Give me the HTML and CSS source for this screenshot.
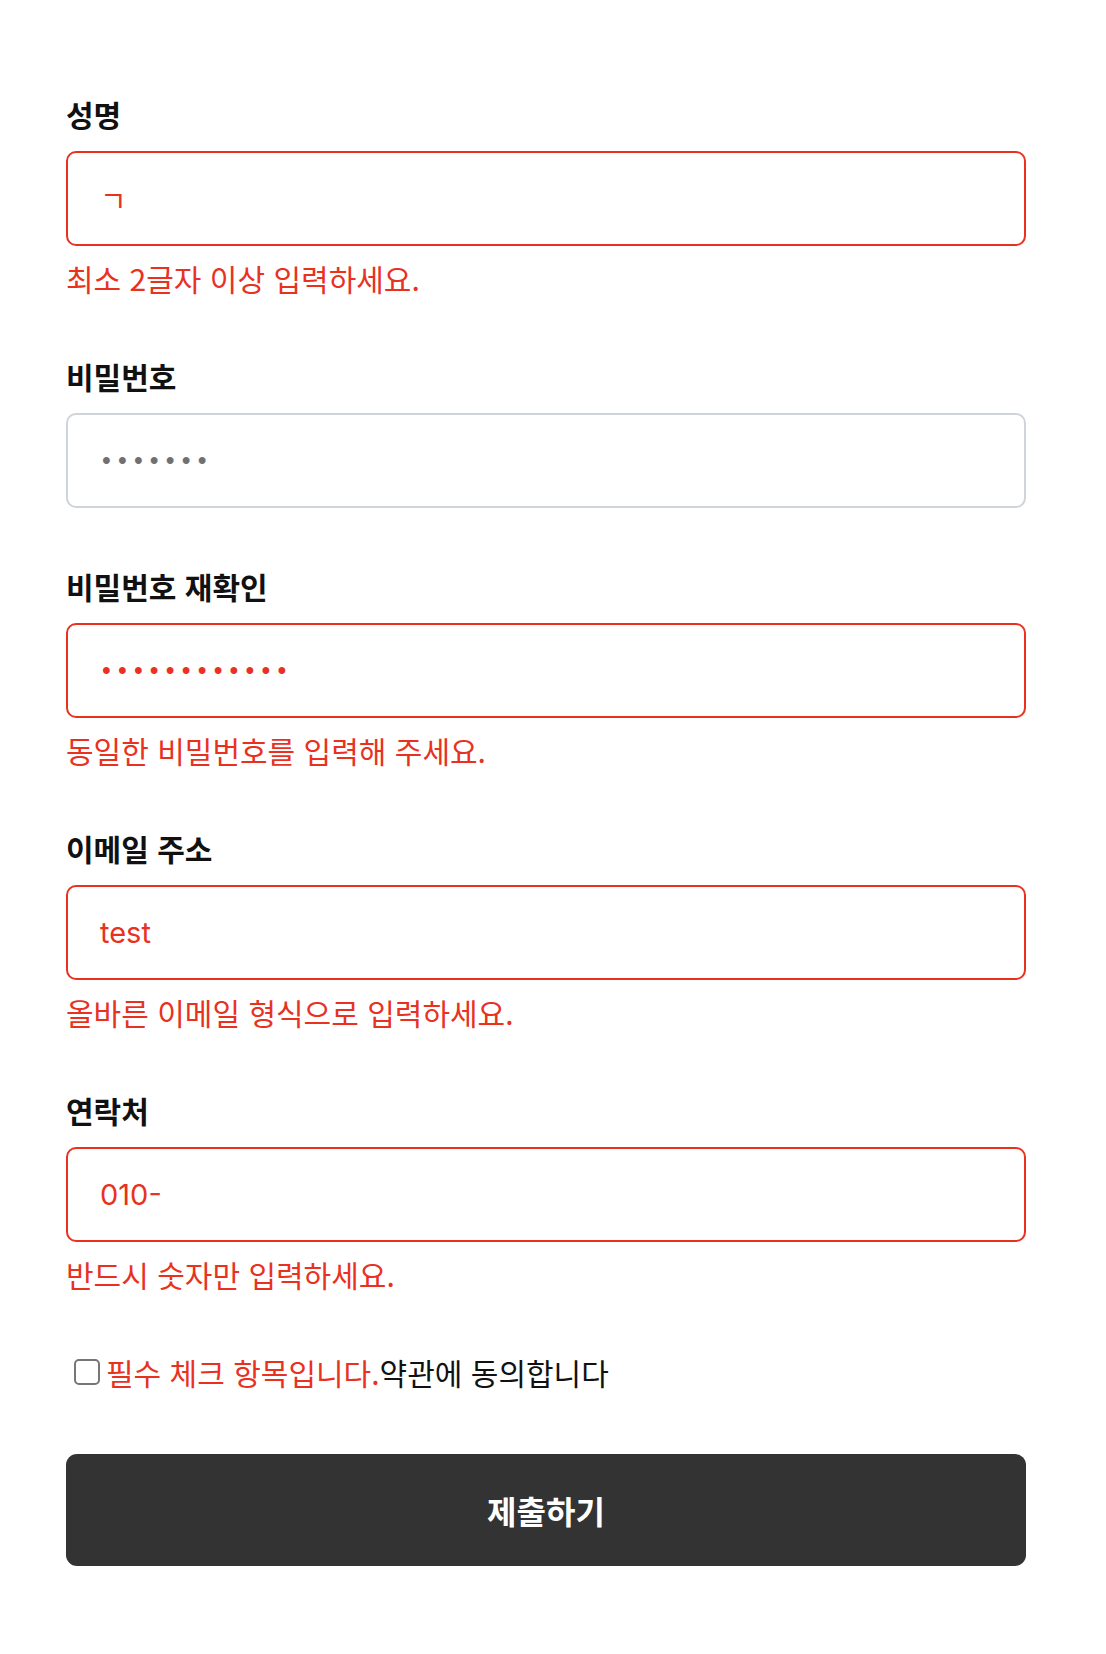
FILE: index.html
```html
<!DOCTYPE html>
<html lang="ko">
<head>
<meta charset="utf-8">
<title>회원가입</title>
<link rel="stylesheet" href="styles.css">
</head>
<body>
<main class="page">
  <form class="signup" novalidate>
    <div class="field">
      <label class="field-label" for="name">성명</label>
      <input class="field-input is-error" id="name" type="text" value="ㄱ">
      <p class="field-error">최소 2글자 이상 입력하세요.</p>
    </div>
    <div class="field">
      <label class="field-label" for="pw">비밀번호</label>
      <input class="field-input is-password" id="pw" type="password" value="abcdefg">
    </div>
    <div class="field">
      <label class="field-label" for="pw2">비밀번호 재확인</label>
      <input class="field-input is-password is-error" id="pw2" type="password" value="abcdefghijkl">
      <p class="field-error">동일한 비밀번호를 입력해 주세요.</p>
    </div>
    <div class="field">
      <label class="field-label" for="email">이메일 주소</label>
      <input class="field-input is-error" id="email" type="text" value="test">
      <p class="field-error">올바른 이메일 형식으로 입력하세요.</p>
    </div>
    <div class="field">
      <label class="field-label" for="tel">연락처</label>
      <input class="field-input is-error" id="tel" type="text" value="010-">
      <p class="field-error">반드시 숫자만 입력하세요.</p>
    </div>
    <label class="agree">
      <input class="agree-box" type="checkbox">
      <span class="agree-error">필수 체크 항목입니다.</span><span class="agree-text">약관에 동의합니다</span>
    </label>
    <button class="submit" type="button">제출하기</button>
  </form>
</main>
</body>
</html>
```
FILE: styles.css
```css
* {
  box-sizing: border-box;
}

html, body {
  margin: 0;
  padding: 0;
  background: #ffffff;
}

body {
  font-family: "Noto Sans CJK KR", "Noto Sans", sans-serif;
  color: #111111;
}

.page {
  padding: 94px 0 80px 66px;
}

.signup {
  width: 960px;
  display: flex;
  flex-direction: column;
  gap: 58px;
}

.field {
  display: flex;
  flex-direction: column;
}

.field-label {
  font-size: 30px;
  line-height: 40px;
  font-weight: 700;
  color: #111111;
  margin-bottom: 17px;
}

.field-input {
  width: 100%;
  height: 95px;
  margin: 0;
  padding: 0 32px;
  border: 2px solid #cfd4da;
  border-radius: 10px;
  background: #ffffff;
  font-family: Inter, "Noto Sans CJK KR", sans-serif;
  font-size: 29px;
  color: #707070;
  outline: none;
}

.field-input.is-password {
  padding-left: 34px;
  font-family: "Liberation Sans", sans-serif;
  font-size: 25px;
  letter-spacing: 7.2px;
}

.field-input.is-error {
  border-color: #e8321f;
  color: #e8321f;
}

.field-error {
  margin: 12px 0 0;
  font-size: 30px;
  line-height: 40px;
  color: #e8321f;
}

.agree {
  display: flex;
  align-items: center;
  font-size: 30px;
  line-height: 40px;
  color: #111111;
}

.agree-box {
  appearance: none;
  -webkit-appearance: none;
  width: 26px;
  height: 26px;
  margin: 0 6px 0 8px;
  border: 2px solid #767676;
  border-radius: 5px;
  background: #ffffff;
  flex: none;
}

.agree-error {
  color: #e8321f;
}

.submit {
  height: 112px;
  margin-top: 4px;
  border: none;
  border-radius: 11px;
  background: #333333;
  color: #ffffff;
  font-family: "Noto Sans CJK KR", sans-serif;
  font-size: 32px;
  font-weight: 700;
  cursor: pointer;
}
```
